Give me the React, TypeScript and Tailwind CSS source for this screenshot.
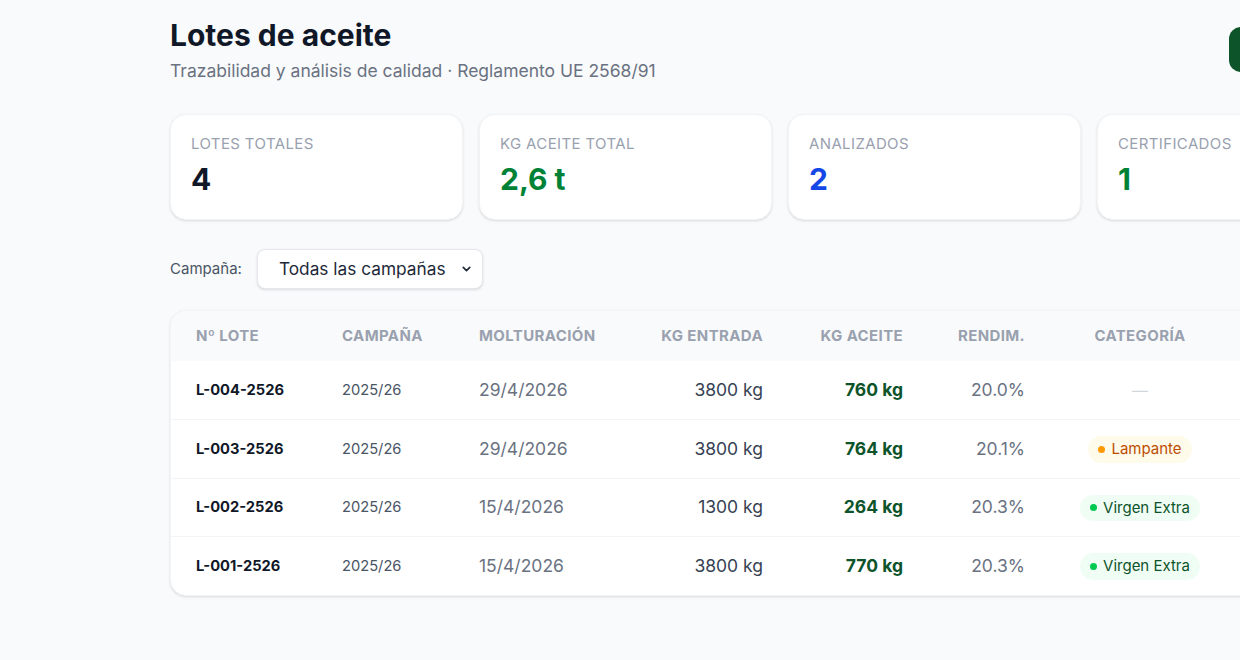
import React from 'react';
import { ChevronDown, Plus } from 'lucide-react';

type Lote = {
  id: string;
  campana: string;
  fecha: string;
  entrada: string;
  aceite: string;
  rendim: string;
  categoria: 'lampante' | 'extra' | null;
};

const lotes: Lote[] = [
  { id: 'L-004-2526', campana: '2025/26', fecha: '29/4/2026', entrada: '3800 kg', aceite: '760 kg', rendim: '20.0%', categoria: null },
  { id: 'L-003-2526', campana: '2025/26', fecha: '29/4/2026', entrada: '3800 kg', aceite: '764 kg', rendim: '20.1%', categoria: 'lampante' },
  { id: 'L-002-2526', campana: '2025/26', fecha: '15/4/2026', entrada: '1300 kg', aceite: '264 kg', rendim: '20.3%', categoria: 'extra' },
  { id: 'L-001-2526', campana: '2025/26', fecha: '15/4/2026', entrada: '3800 kg', aceite: '770 kg', rendim: '20.3%', categoria: 'extra' },
];

const stats = [
  { label: 'Lotes totales', value: '4', color: 'text-gray-900' },
  { label: 'Kg aceite total', value: '2,6 t', color: 'text-green-700' },
  { label: 'Analizados', value: '2', color: 'text-blue-700' },
  { label: 'Certificados', value: '1', color: 'text-green-700' },
];

const Categoria: React.FC<{ value: Lote['categoria'] }> = ({ value }) => {
  if (value === 'lampante') {
    return (
      <span className="inline-flex items-center gap-1.5 rounded-full bg-amber-50 px-2.5 py-[2px] text-[15px] text-amber-700">
        <span className="h-[7px] w-[7px] rounded-full bg-amber-500" />
        Lampante
      </span>
    );
  }
  if (value === 'extra') {
    return (
      <span className="inline-flex items-center gap-1.5 rounded-full bg-green-50 px-2.5 py-[2px] text-[15px] text-green-900">
        <span className="h-[7px] w-[7px] rounded-full bg-green-500" />
        Virgen Extra
      </span>
    );
  }
  return <span className="text-gray-300">—</span>;
};

export default function App() {
  return (
    <div
      className="min-h-[660px] w-full overflow-hidden bg-gray-50"
      style={{ fontFamily: 'Inter, "Noto Sans", sans-serif' }}
    >
      <div className="ml-[170px] w-[1220px] pt-[17px]">
        <div className="flex items-start justify-between">
          <div>
            <h1 className="text-[30px] font-bold leading-9 text-gray-900">Lotes de aceite</h1>
            <p className="mt-1.5 text-[17.5px] leading-6 text-gray-500">
              Trazabilidad y análisis de calidad · Reglamento UE 2568/91
            </p>
          </div>
          <button className="mt-[10px] flex h-[45px] w-[161px] items-center justify-center gap-2 rounded-xl bg-green-900 text-sm font-semibold text-white">
            <Plus size={16} />
            Nuevo lote
          </button>
        </div>

        <div className="mt-[31px] grid grid-cols-4 gap-4">
          {stats.map((s) => (
            <div
              key={s.label}
              className="rounded-2xl border border-gray-100 bg-white px-5 pt-[19px] pb-[22px] shadow-sm"
            >
              <div className="text-[15px] uppercase leading-5 tracking-wide text-gray-400">{s.label}</div>
              <div className={`mt-[7px] text-[30px] font-bold leading-9 ${s.color}`}>{s.value}</div>
            </div>
          ))}
        </div>

        <div className="mt-[29px] flex items-center gap-[15px]">
          <span className="text-[15px] text-gray-600">Campaña:</span>
          <div className="relative">
            <select className="h-10 w-[226px] appearance-none rounded-lg border border-gray-200 bg-white pl-[21px] pr-8 text-[17.3px] text-gray-800 shadow-sm">
              <option>Todas las campañas</option>
              <option>2025/26</option>
            </select>
            <ChevronDown
              size={13}
              strokeWidth={3}
              className="pointer-events-none absolute right-[10px] top-1/2 -translate-y-1/2 text-gray-800"
            />
          </div>
        </div>

        <div className="mt-[21px] overflow-hidden rounded-2xl border border-gray-100 bg-white shadow-sm">
          <table className="w-full table-fixed border-collapse">
            <colgroup>
              <col className="w-[147px]" />
              <col className="w-[137px]" />
              <col className="w-[165px]" />
              <col className="w-[167px]" />
              <col className="w-[140px]" />
              <col className="w-[122px]" />
              <col className="w-[182px]" />
              <col />
            </colgroup>
            <thead>
              <tr className="h-[50px] bg-gray-50 text-[15px] font-bold uppercase tracking-wide text-gray-400">
                <th className="pl-[25px] pr-6 text-left font-bold">Nº Lote</th>
                <th className="px-6 text-left font-bold">Campaña</th>
                <th className="px-6 text-left font-bold">Molturación</th>
                <th className="px-6 text-right font-bold">Kg entrada</th>
                <th className="px-6 text-right font-bold">Kg aceite</th>
                <th className="px-6 text-right font-bold">Rendim.</th>
                <th className="px-6 text-center font-bold">Categoría</th>
                <th className="px-6 text-center font-bold">Estado</th>
              </tr>
            </thead>
            <tbody>
              {lotes.map((l, i) => (
                <tr key={l.id} className={`h-[58.5px] ${i > 0 ? 'border-t border-gray-100' : ''}`}>
                  <td className="pl-[25px] pr-6 text-[14.7px] font-bold text-gray-900">{l.id}</td>
                  <td className="px-6 text-[14.7px] text-gray-600">{l.campana}</td>
                  <td className="px-6 text-[17.5px] text-gray-500">{l.fecha}</td>
                  <td className="px-6 text-right text-[17.5px] text-gray-700">{l.entrada}</td>
                  <td className="px-6 text-right text-[17.5px] font-bold text-green-900">{l.aceite}</td>
                  <td className="px-6 text-right text-[17.5px] text-gray-500">{l.rendim}</td>
                  <td className="px-6 text-center">
                    <Categoria value={l.categoria} />
                  </td>
                  <td className="px-6 text-center text-sm text-gray-500">Analizado</td>
                </tr>
              ))}
            </tbody>
          </table>
        </div>
      </div>
    </div>
  );
}
